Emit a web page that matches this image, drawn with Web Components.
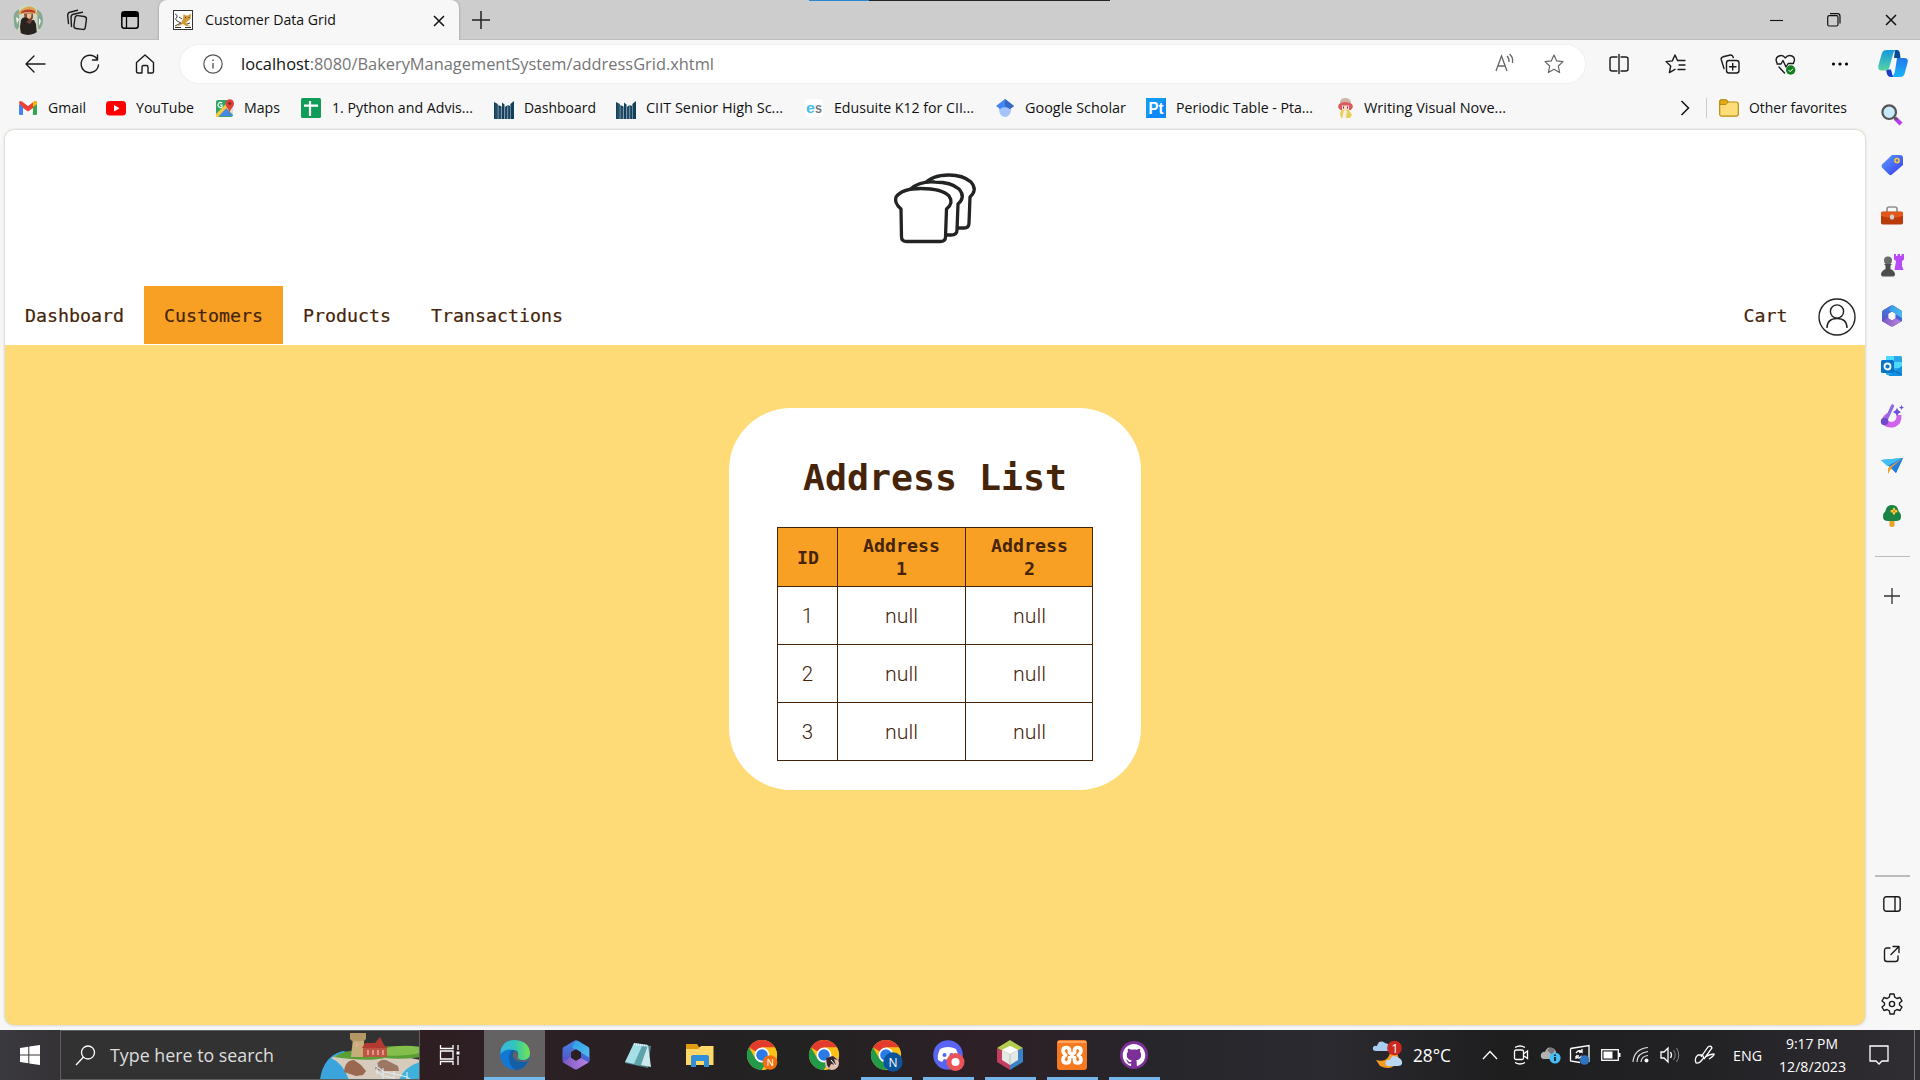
<!DOCTYPE html>
<html lang="en">
<head>
<meta charset="utf-8">
<title>Customer Data Grid</title>
<style>
html,body{margin:0;padding:0;width:1920px;height:1080px;overflow:hidden;background:#f7f7f7}
body{font-family:"Open Sans","Noto Sans",sans-serif;color:#111}
</style>
</head>
<body>
<desktop-screen></desktop-screen>
<script>
const S='fill="none" stroke="#1b1b1b" stroke-width="1.4" stroke-linejoin="round" stroke-linecap="round"';
const W='fill="none" stroke="#fff" stroke-width="1.3"';
const CHROME=`<circle cx="15" cy="15" r="15" fill="#fbc116"/><path d="M15 15L2 7.5A15 15 0 0 1 28 7.5H15Z" fill="#e33b2e"/><path d="M2 7.5A15 15 0 0 0 15 30L21.5 18.7L8.5 18.7Z" fill="#229a4a"/><path d="M28 7.5H15L21.5 18.7L15 30A15 15 0 0 0 28 7.5" fill="#fbc116"/><circle cx="15" cy="15" r="7.4" fill="#fff"/><circle cx="15" cy="15" r="5.8" fill="#2a7be8"/>`;
const M365=`<defs><clipPath id="hx"><path clip-rule="evenodd" d="M9.500 .800Q11 0 12.500 .800L20 5.200Q21 6 21 7.300V14.700Q21 16 20 16.700L12.500 21.200Q11 22 9.500 21.200L2 16.700Q1 16 1 14.700V7.300Q1 6 2 5.200ZM11 6.600L7.300 8.800V13.200L11 15.400L14.700 13.200V8.800Z"/></clipPath><linearGradient id="m1" x2="0" y2="1"><stop stop-color="#3b86e0"/><stop offset="1" stop-color="#5a4fc8"/></linearGradient><linearGradient id="m2" x2="1" y2="1"><stop stop-color="#2f9ce6"/><stop offset="1" stop-color="#56c4f2"/></linearGradient><linearGradient id="m3" x2="1"><stop stop-color="#7a58c0"/><stop offset="1" stop-color="#bd84e2"/></linearGradient></defs><g clip-path="url(#hx)"><rect width="22" height="22" fill="#7a5cc6"/><path d="M11 0L1 6V17L7.300 13V9L14.200 5V0Z" fill="url(#m1)"/><path d="M11 0H22V16L14.200 11.500V9L8 5.500Z" fill="url(#m2)"/><path d="M21 16L11 22L1 16.500L7.300 12.500L11 14.800L14.200 13V11Z" fill="url(#m3)"/><path d="M14.200 9L21 13V17L14.200 13Z" fill="#4764d6"/></g>`;
const CIIT=`<path d="M0 3L3.800 5V20H0ZM4.300 6L7.500 7.500V20H4.300ZM8 3.500L10.500 5.500V20H8ZM11 8L13 6.500V20H11ZM13.400 6L16 7V20H13.400ZM16.400 5L20 2V20H16.400Z" fill="#123f5b"/><path d="M2 5V20M6 9V20M12 9V20M14.700 8V20" stroke="#47708a" stroke-width=".6"/>`;
const ICONS={
avatar:[30,30,`<clipPath id="c"><circle cx="15" cy="15" r="15"/></clipPath><g clip-path="url(#c)"><rect width="30" height="30" fill="#cfd8c4"/><path d="M0 8L6 4V22L2 28ZM24 4L30 9V24L25 24Z" fill="#86a893"/><path d="M3 12l3 2-2 5zM26 13l2 3-2 5z" fill="#f5f4e8"/><path d="M6 7Q11 1 18 1.500Q24 3 23 7L27 10Q15 6 5 10Z" fill="#dba552"/><path d="M8.500 6.500Q14 3 22 6L22 8Q14 6 8 8.500Z" fill="#bd3b2e"/><path d="M11 8.500H20L20 13L18 16H12Z" fill="#8f4a33"/><path d="M14 9H18.500L18 12.500L16 14L14 12.500Z" fill="#e9bd98"/><path d="M8 15Q10 11 14 13L17 15L21 15L23 19L24 30H8L7 22Z" fill="#28231f"/><path d="M17 14L20 15L17 19L13 17Z" fill="#6b4733"/></g>`],
stack:[22,22,`<g ${S}><rect x="8.500" y="7" width="11.500" height="13" rx="2.500" transform="rotate(8 14 13)"/><path d="M5.500 17.500L5 8.500Q5 6 7.500 5.200L16.500 3.200"/><path d="M2.500 14.500L1.700 6.500Q1.500 4 4 3.200L11.500 1.300"/></g>`],
tabact:[18,18,`<rect x=".8" y=".8" width="16.400" height="16.400" rx="2.500" fill="none" stroke="#000" stroke-width="1.500"/><path d="M1 1H17V6H1Z"/><path d="M5.500 5V17" stroke="#000" stroke-width="1.300"/>`],
tomcat:[20,20,`<rect x=".5" y=".5" width="19" height="19" fill="#fff" stroke="#333"/><path d="M3 17L8 13L10 9L10.500 4L13 5.500H15L18 3.500L17.500 9L13 12.500L15 15L18 16.500L13 16L10 14Z" fill="#d19b34"/><path d="M2 4Q5 5 4 7Q1 9 4 11L8 13L2 16M9 9L6 7M14 14L17 13" fill="none" stroke="#444"/><path d="M12 7.500H13M15.500 7.500H16.500M2 17.500H8M12 17.500H18" stroke="#333"/>`],
x:[12,12,`<path d="M1 1L11 11M11 1L1 11" stroke="#111" stroke-width="1.500"/>`],
plus:[18,18,`<path d="M0 9H18M9 0V18" stroke="#222" stroke-width="1.500"/>`],
min:[14,14,`<path d="M0 7.500H13" stroke="#111" stroke-width="1.100"/>`],
rest:[14,14,`<g fill="none" stroke="#111" stroke-width="1.200"><rect x=".7" y="2.700" width="10.300" height="10.300" rx="1.500"/><path d="M3 .7H10.500Q13 .7 13 3.200V10.500"/></g>`],
back:[20,18,`<path d="M9 1L1 9L9 17M1 9H20" ${S}/>`],
reload:[20,20,`<path d="M18.500 11A8.700 8.700 0 1 1 16.800 4.700M17.500 1V6H12.500" ${S}/>`],
home:[20,20,`<path d="M1.500 8.500L10 1L18.500 8.500V17.500Q18.500 19 17 19H13V13Q13 11.500 11.500 11.500H8.500Q7 11.500 7 13V19H3Q1.500 19 1.500 17.500Z" ${S}/>`],
info:[20,20,`<circle cx="10" cy="10" r="9.200" fill="none" stroke="#555" stroke-width="1.200"/><path d="M10 9V14.500M10 5.500V7" stroke="#555" stroke-width="1.400"/>`],
read:[20,20,`<path d="M1 18L6.500 3L12 18M3 13H10M12 3Q14.500 5.500 14 9M14.500 1Q18.500 4.500 17.500 10" fill="none" stroke="#666" stroke-width="1.300"/>`],
star:[20,20,`<path d="M10 1L12.700 6.900L19 7.600L14.300 12L15.600 18.600L10 15.300L4.400 18.600L5.700 12L1 7.600L7.300 6.900Z" fill="none" stroke="#666" stroke-width="1.200" stroke-linejoin="round"/>`],
split:[20,20,`<path d="M8 3H3.200Q1 3 1 5V15Q1 17 3.200 17H8M12 3H16.800Q19 3 19 5V15Q19 17 16.800 17H12M10 .5V19.500" ${S}/>`],
favs:[21,20,`<path d="M12.500 6.500L10 1L7.300 6.900L1 7.600L5.700 12L4.400 18.600L10 15.300M12.500 6.500H20M14 11H20M13 15.500H20" ${S}/>`],
coll:[20,20,`<g ${S}><rect x="6.500" y="6.500" width="12.500" height="12.500" rx="2.500"/><path d="M12.700 9.500V16M9.500 12.700H16M4 14.500L1.200 5.500Q.8 3.500 3 2.800L10.500 1Q12.500.7 13.300 3.500"/></g>`],
heart:[21,21,`<path d="M2 9Q-.5 4 4 2Q8 .5 10.200 4Q13 .5 17 2Q21 4 18.500 9M2 10H6L8 6.500L11 13L13.200 9.500H18.500M4 13L9.500 19" ${S}/><circle cx="15.700" cy="16" r="4.700" fill="#12801f"/><path d="M13.500 16L15.200 17.700L18 14.700" fill="none" stroke="#fff"/>`],
dots:[18,6,`<circle cx="2.500" cy="3" r="1.600"/><circle cx="9" cy="3" r="1.600"/><circle cx="15.500" cy="3" r="1.600"/>`],
copilot:[30,28,`<defs><linearGradient id="a" x2="0" y2="1"><stop stop-color="#1597df"/><stop offset="1" stop-color="#55d4a0"/></linearGradient><linearGradient id="b" x2="0" y2="1"><stop stop-color="#2377e8"/><stop offset="1" stop-color="#14b6fa"/></linearGradient></defs><path d="M19 8H26Q31 8 29.500 13L26.500 24Q25.500 27 22 27H13Q16 26 17 21Z" fill="url(#b)"/><path d="M8 19.500H13L15 27H13Q10 27 9 24Z" fill="#173ecb"/><path d="M17 0H19Q21.500 0 22 4L22.500 8H16Z" fill="#064b8f"/><path d="M4 3Q5 0 9 0H18Q15.500 1 14.500 6L11.500 17Q10.500 20.500 7 20.500H4Q-1 20.500 .5 15Z" fill="url(#a)"/>`],
gmail:[18,14,`<path d="M0 2V13H4V6L9 10L14 6V13H18V2" fill="#fff"/><path d="M0 3V13Q0 14 1 14H4V4Z" fill="#4285f4"/><path d="M14 4V14H17Q18 14 18 13V3Z" fill="#34a853"/><path d="M0 2Q0-1 3 .5L9 5L15 .5Q18-1 18 2L14 7L9 10.500L4 7Z" fill="#ea4335"/><path d="M14 1.500L16 0Q18 0 18 3L14 6Z" fill="#fbbc04"/>`],
yt:[20,15,`<rect width="20" height="14.500" rx="3.500" fill="#f00"/><path d="M8 4V10.500L13.500 7.200Z" fill="#fff"/>`],
maps:[18,18,`<rect y="1" width="17" height="17" rx="2" fill="#31a567"/><path d="M1 17L9 9L17 17Z" fill="#4687e8"/><path d="M0 15L12 3L14 5L2 18H0Z" fill="#f8cd3b"/><path d="M10 9L17 16V6Z" fill="#ddd"/><path d="M13.500 14C13 10 9.500 8 9.500 4.500A4.200 4.200 0 0 1 18 4.500C18 8 14 10 13.500 14" fill="#df4237"/><circle cx="13.700" cy="4.500" r="1.500" fill="#842c22"/><path d="M6 4A2.500 2.500 0 1 0 6 8V6H4" fill="none" stroke="#fff" stroke-width="1.100"/>`],
sheets:[20,20,`<rect width="20" height="20" rx="1.500" fill="#109d58"/><path d="M3 7.700H17M9 3V18" stroke="#fff" stroke-width="2.200"/>`],
ciit:[20,20,CIIT],
es:[18,18,`<rect width="18" height="18" rx="3" fill="#fff"/><text x="1" y="13.500" font-family="Liberation Sans" font-size="14" font-weight="bold" textLength="9" lengthAdjust="spacingAndGlyphs" fill="#46bfe5">e</text><text x="10" y="13.500" font-family="Liberation Sans" font-size="14" font-weight="bold" textLength="7" lengthAdjust="spacingAndGlyphs" fill="#777">s</text>`],
scholar:[18,18,`<path d="M3 8H15V11Q14 18 9 18Q4 18 3 11Z" fill="#a3c3fb"/><path d="M9 0L18 7L14 10Q9 6 4 10L0 7Z" fill="#4285f4"/><path d="M9 0L18 7L14 10Q12 8 9 8Z" fill="#356ac3"/>`],
pt:[20,20,`<rect width="20" height="20" fill="#129af5"/><path d="M0 20L20 0V20Z" fill="#087ff8" opacity=".6"/><text x="2.500" y="15.500" font-family="Liberation Sans" font-size="16" font-weight="bold" textLength="15" lengthAdjust="spacingAndGlyphs" fill="#fff">Pt</text>`],
girl:[18,20,`<path d="M3 4Q4 0 8 0Q13 0 14 4V7H3Z" fill="#cfb7a8"/><path d="M2 6Q8 2 15 6L16 9L14 12H3L1 9Z" fill="#dc5a60"/><path d="M5 7.500H12V12H5Z" fill="#f9ddc9"/><path d="M4 12H12L15 17L13 20H4L3 16Z" fill="#e9cf55"/><path d="M7 12L10 13L9 20H5Z" fill="#f4efe6"/><path d="M6.500 8.500v2M10.500 8.500v2" stroke="#634"/>`],
chev:[10,16,`<path d="M1.500 1L8.500 8L1.500 15" fill="none" stroke="#111" stroke-width="1.500"/>`],
fold:[20,18,`<path d="M.7 3Q.7.8 3 .8H7L9.500 3H17Q19.300 3 19.300 5V15Q19.300 17.200 17 17.200H3Q.7 17.200 .7 15Z" fill="#fddc7a" stroke="#b98b0b" stroke-width="1.200"/><path d="M1 1H7L9 3L7 5.500H1Z" fill="#e5ad12" stroke="#b98b0b"/>`],
search:[22,22,`<path d="M14 14L20 20" stroke="#b83de8" stroke-width="4"/><path d="M13 13L16 16" stroke="#555" stroke-width="2"/><circle cx="8.200" cy="8.200" r="6.800" fill="#c9e9fc" stroke="#555" stroke-width="2.200"/>`],
tag:[22,22,`<defs><linearGradient id="g" x2="1" y2="1"><stop stop-color="#59a3ff"/><stop offset="1" stop-color="#3835ed"/></linearGradient></defs><path d="M11 1L19 1Q22 1 22 4V11L11 20.500Q9.500 22 8 20.500L1 13.500Q0 12 1 10.500Z" fill="url(#g)"/><circle cx="16" cy="6.500" r="2.100" fill="#5c6be0" stroke="#ffcd32" stroke-width="1.500"/>`],
tool:[24,18,`<path d="M7 6V3Q7 1 9 1H15Q17 1 17 3V6" fill="none" stroke="#929292" stroke-width="1.700"/><rect x="1" y="5.500" width="22" height="13" rx="1.800" fill="#b93a0b"/><path d="M1 6H23V10L14 12H10L1 10Z" fill="#e3581a"/><rect x="10" y="8.500" width="4" height="5" rx="1.500" fill="#d0d0d0"/>`],
chess:[24,25,`<path d="M14 1H16V3H17.500V1H20V3H21.500V1H24V6.500L22 8V13L23.500 17H14.500L16 8L14 6.500Z" fill="#b84bf5"/><circle cx="8" cy="7.500" r="4" fill="#6a6a6a"/><path d="M4 11H12L10.500 12.500V16Q14.500 18 15 21Q15 23.500 13 23.500H3Q1 23.500 1 21Q1.500 18 5.500 16V12.500Z" fill="#4d4d4d"/>`],
m365:[22,22,M365],
outlook:[22,22,`<rect x="5" y="1" width="16" height="19" rx="1.500" fill="#28a8ea"/><path d="M5 1H13V7H5ZM13 7H21V13H13Z" fill="#50d9ff"/><path d="M21 11V20Q21 21 20 21H7Z" fill="#1490df"/><path d="M5 11L21 20" stroke="#0a62b8"/><rect y="5" width="13" height="13" rx="1.500" fill="#0876c8"/><circle cx="6.500" cy="11.500" r="3" fill="none" stroke="#fff" stroke-width="1.800"/>`],
design:[24,24,`<path d="M7 9Q0 14 3 20Q7 25 15 23Q22 20 21.500 11L16.500 11Q17 18 11 18Q6 17 9 11Z" fill="#ce64ec"/><path d="M12.500 2L6.500 15" stroke="#8f6ae0" stroke-width="3.200" stroke-linecap="round"/><ellipse cx="4.500" cy="17.500" rx="3.700" ry="3.700" fill="#7049c8"/><path d="M17 4L18.500 6.500L21 8L18.500 9.500L17 12L15.500 9.500L13 8L15.500 6.500ZM21.500 1L22.300 2.700L24 3.500L22.300 4.300L21.500 6L20.700 4.300L19 3.500L20.700 2.700Z" fill="#6a50dc"/>`],
plane:[22,18,`<path d="M0 3L22 1L15 16L10 11Z" fill="#2088ec"/><path d="M0 3L22 1L6 9Z" fill="#43bdf5"/><path d="M22 1L7 11V17L10 12Z" fill="#f5a020"/><path d="M22 1L10 11L15 16Z" fill="#257cdf"/>`],
tree:[20,25,`<path d="M7.500 14H12.500V22Q10 24 7.500 22Z" fill="#f0a026"/><path d="M10 1Q15.500 1 16.500 7Q19 9 19 13Q19 17 14 17H6Q1 17 1 13Q1 9 3.500 7Q4.500 1 10 1" fill="#198443"/><path d="M12 5V9.500M9.700 7.200H14.300" stroke="#ffc93c" stroke-width="2.400" stroke-linecap="round"/><circle cx="12" cy="7.200" r="1" fill="#d98000"/>`],
splus:[16,16,`<path d="M0 8H16M8 0V16" stroke="#333" stroke-width="1.300"/>`],
panel:[18,16,`<rect x=".8" y=".8" width="16.400" height="14.400" rx="2.500" ${S}/><path d="M12 1V15" ${S}/>`],
share:[18,18,`<path d="M7 3H4Q1.500 3 1.500 5.500V14Q1.500 16.500 4 16.500H12.500Q15 16.500 15 14V11M10 1.500H16V7.500M16 1.500L8 9.500" ${S}/>`],
gear:[22,22,`<path d="M9 1H13L13.700 4.200L16 5.500L19 4.500L21 8L18.500 10V12L21 14L19 17.500L16 16.500L13.700 17.800L13 21H9L8.300 17.800L6 16.500L3 17.500L1 14L3.500 12V10L1 8L3 4.500L6 5.500L8.300 4.200Z" ${S}/><circle cx="11" cy="11" r="2.600" ${S}/>`],
bread:[84,72,`<g fill="#fff" stroke="#222423" stroke-width="3.300" stroke-linejoin="round"><path d="M31 12Q38 2 56 2Q70 2 78 9Q85 17 77 24L76 50Q76 55 71 55H55V22Z"/><path d="M18 16Q26 8 42 9Q58 9 66 16Q73 24 65 31L64 57Q64 62 58 62H45V25Z"/><path d="M8 36Q1 30 3 24Q9 15.500 28 15.500Q49 15.500 56 23Q61 30 53.500 36L52.500 64Q52.500 68.500 47 68.500H14Q8.500 68.500 8.500 64Z"/></g>`],
user:[38,38,`<g fill="none" stroke="#222" stroke-width="1.400"><circle cx="19" cy="19" r="18"/><circle cx="19" cy="13.500" r="6.600"/><path d="M9 30Q9 20.500 19 20.500Q29 20.500 29 30"/></g>`],
win:[20,20,`<path d="M0 3L8.300 1.700V9.500H0ZM9.300 1.500L20 0V9.500H9.300ZM0 10.500H8.300V18.300L0 17ZM9.300 10.500H20V20L9.300 18.500Z" fill="#fff"/>`],
mag:[21,21,`<g ${W}><circle cx="13" cy="7.500" r="6.500"/><path d="M8.500 12L1 20"/></g>`],
castle:[100,47,`<path d="M0 47Q3 23 23 18L44 23L35 31L54 47Z" fill="#39a5dc"/><path d="M11 25Q30 14 66 20L100 27V47H29Q23 30 11 25" fill="#d7cbbd"/><path d="M79 47Q84 34 100 29V47Z" fill="#3eb1dc"/><path d="M14 24Q27 15 48 18Q72 9 100 16V24Q80 27 65 25Q48 29 14 24" fill="#5a9e36"/><path d="M57 18Q79 10 100 14V20Q84 24 57 22Z" fill="#84bf4c"/><path d="M33 5H44V24H31Z" fill="#c6ad79"/><path d="M30 0H46V6L44 8H32L30 6Z" fill="#b59665"/><path d="M43 14H67V24H43Z" fill="#bd5540"/><path d="M42 15L45 10H55L60 4L64 12L67 15Z" fill="#b23a30"/><path d="M48 17v5M53 17v5M58 17v5M63 17v5M37 10v4" stroke="#eaa" stroke-width="1.500"/><path d="M24 39Q25 27 34 27L41 32L46 38L43 42L36 43Z" fill="#9a6850"/><path d="M55 36Q58 25 66 27L78 33L79 38L61 38Z" fill="#9b7764"/><path d="M57 31V41M63 35V46M74 38V47M87 39V47M56 33L64 39L75 41L87 44L91 47M56 38L64 43L74 45" fill="none" stroke="#dcebf2" stroke-width="1.100"/>`],
taskview:[22,22,`<g fill="none" stroke="#fff" stroke-width="1.300"><path d="M1.500 1V4.500H14V1M1.500 21V17.500H14V21M1.500 7H14V15H1.500ZM19 1V6M19 12V21"/></g><path d="M17.500 7.500H20.500V10.500H17.500Z" fill="#fff"/>`],
edge:[30,30,`<defs><linearGradient id="e"><stop stop-color="#35b8e9"/><stop offset=".5" stop-color="#32c5b5"/><stop offset="1" stop-color="#72e64e"/></linearGradient></defs><circle cx="15" cy="15" r="14.800" fill="#1378d4"/><path d="M.5 12Q2 0 15 0Q29 1 30 13Q30 20 23 20Q17 20 18 17Q19 11 13 10Q6 8 .5 14Z" fill="url(#e)"/><path d="M12 10Q19 9 18 16Q16 20 24 20.500Q28 20 29 18Q26 30 15 30Q8 24 9 17Q10 11 12 10" fill="#135fa8"/><path d="M14 11Q19 12 18 16.500Q17 20 23 20.500L30 19L29 21Q24 23 18 21Q12 19 13 14Z" fill="#656264"/>`],
m365b:[30,30,`<g transform="scale(1.36)">${M365}</g>`],
note:[29,28,`<path d="M11 3L27 5L24 27L1 22Z" fill="#4c7f87"/><path d="M10 2L24 4L15 24L1 21Z" fill="#a5dfe8"/><path d="M18 5L25 5L18 25L10 23Z" fill="#5ea2ab"/><path d="M24 4L27 26L17 24Z" fill="#cce9ed"/><path d="M10 3L24 5" stroke="#eee" stroke-width="2" stroke-dasharray="1 1"/>`],
files:[28,24,`<path d="M0 1H11L13 4H27V7H0Z" fill="#e09b13"/><path d="M0 6H12L15 3H27.500V22H0Z" fill="#ffd867"/><path d="M5 24V14Q5 12 7 12H21Q23 12 23 14V24H18V18H10V24Z" fill="#3290db"/>`],
chr1:[30,30,CHROME+`<circle cx="23" cy="22.500" r="7.300" fill="#ee7011"/><text x="19.800" y="26" font-family="Open Sans" font-size="9.500" fill="#fff">N</text>`],
chr2:[30,30,CHROME+`<circle cx="23" cy="23" r="7" fill="#e4bcae"/><path d="M17 18L24 16L29 20L25 19L27 25L22 24L20 28L18 25Z" fill="#36272a"/><path d="M22 20l5 6" stroke="#fff"/>`],
chr3:[30,30,CHROME+`<circle cx="22" cy="22" r="9.700" fill="#0c559d"/><text x="17.500" y="26.500" font-family="Open Sans" font-size="12" fill="#fff">N</text>`],
discord:[30,30,`<circle cx="15" cy="15" r="14.800" fill="#5865f2"/><path d="M7 9Q15 5 23 9Q26 15 25 20L21 22L19 19Q15 20 11 19L9 22L5 20Q4 15 7 9" fill="#fff"/><circle cx="11.500" cy="15" r="2" fill="#5865f2"/><circle cx="18.500" cy="15" r="2" fill="#5865f2"/><circle cx="22.500" cy="22" r="9" fill="#ec5357"/><circle cx="22.500" cy="22" r="4" fill="#fff"/>`],
netb:[28,30,`<path d="M14 0L27 8L14 15L1 8Z" fill="#b4cd4e"/><path d="M1 8L14 15V30L1 22Z" fill="#c43e60"/><path d="M27 8L14 15V30L27 22Z" fill="#3b83c6"/><path d="M14 6L22 10V20L14 25L6 20V10Z" fill="#e5e9e5"/><path d="M6 10L14 14L22 10M14 14V25" fill="none" stroke="#b8c3bc"/><path d="M14 6L22 10L14 14L6 10Z" fill="#fff"/>`],
xampp:[30,30,`<rect width="30" height="30" rx="3" fill="#f47920"/><path d="M1 2H29" stroke="#ffb77d" stroke-width="1.500"/><path d="M12.500 10Q12 7.500 9.500 7.500Q6 7.500 6 11Q6 13 8.500 15Q6 17 6 19.500Q6 23 9.500 23Q12.500 23 12.500 20V17.500L15 15L12.500 12.500ZM17.500 10Q18 7.500 20.500 7.500Q24 7.500 24 11Q24 13 21.500 15Q24 17 24 19.500Q24 23 20.500 23Q17.500 23 17.500 20V17.500L15 15L17.500 12.500Z" fill="none" stroke="#fff" stroke-width="3.700" stroke-linejoin="round"/>`],
github:[28,28,`<circle cx="14" cy="14" r="14" fill="#7d3098"/><path transform="translate(2.700 2.700) scale(.94)" fill="#fff" d="M12 .297c-6.630 0-12 5.373-12 12 0 5.303 3.438 9.800 8.205 11.385.6.113.82-.258.82-.577 0-.285-.01-1.040-.015-2.040-3.338.724-4.042-1.610-4.042-1.610C4.422 18.070 3.633 17.700 3.633 17.700c-1.087-.744.084-.729.084-.729 1.205.084 1.838 1.236 1.838 1.236 1.070 1.835 2.809 1.305 3.495.998.108-.776.417-1.305.76-1.605-2.665-.3-5.466-1.332-5.466-5.930 0-1.310.465-2.380 1.235-3.220-.135-.303-.54-1.523.105-3.176 0 0 1.005-.322 3.300 1.230.96-.267 1.980-.399 3-.405 1.020.006 2.040.138 3 .405 2.280-1.552 3.285-1.230 3.285-1.230.645 1.653.24 2.873.12 3.176.765.840 1.230 1.910 1.230 3.220 0 4.610-2.805 5.625-5.475 5.920.42.360.81 1.096.81 2.220 0 1.606-.015 2.896-.015 3.286 0 .315.21.690.825.570C20.565 22.092 24 17.592 24 12.297c0-6.627-5.373-12-12-12"/>`],
weather:[32,30,`<path d="M4 20Q18 24 19 7Q28 12 26 21Q20 32 8 26Z" fill="#f59a22"/><path d="M4 11Q0 11 1 7Q3 5 5 6Q7-1 13 3Q20 4 18 11Z" fill="#a9ccf1"/><path d="M16 26Q12 25 14 21Q16 19 18 20Q20 14 25 17Q31 19 30 24Q29 26 26 26Z" fill="#b9d8f6"/><circle cx="22.500" cy="8" r="7.300" fill="#ca2921"/><text x="19.500" y="12.500" font-family="Open Sans" font-size="12" fill="#fff">1</text>`],
up:[16,10,`<path d="M1 9L8 1.500L15 9" ${W}/>`],
cam:[16,20,`<g ${W}><rect x="1.500" y="5" width="9" height="9.500" rx="1.500"/><path d="M11 8.500L14.500 6V13.500L11 11M2 2.500Q7-.5 12 2.500M2 17.500Q7 20.500 12 17.500"/></g>`],
cloud:[22,20,`<path d="M3 14Q0 13 1 9Q3 6 5 7Q7 1 12 3Q16 4 16 8L20 11Q20 14 17 14Z" fill="#b2b2b2"/><path d="M7 5Q12 0 15 5L12 10Z" fill="#777"/><circle cx="15" cy="13" r="5.600" fill="#46bdf5"/><path d="M15 12V16M15 9.500V11" stroke="#111" stroke-width="1.600"/>`],
sync:[22,22,`<path d="M1.500 4.500L20 1.500V18M1.500 4.500V17L11 18.500" ${W}/><path d="M7 9Q10 5 13 8V5M13 8H10M13 12Q9 16 7 12V15M7 12H10" ${W}/><circle cx="15.500" cy="16" r="4.800" fill="#2f73c1"/>`],
bat:[20,12,`<rect x=".7" y=".7" width="16.600" height="10.600" ${W}/><path d="M2.500 2.500H11.500V9.500H2.500Z" fill="#fff"/><path d="M18.500 4V8" stroke="#fff" stroke-width="2"/>`],
wifi:[18,18,`<path d="M1 16Q2 3 16 1.500M5 16Q5 7 16 5.500M9 16Q9.500 10 16 9.500" fill="none" stroke="#ddd" stroke-width="1.200"/><circle cx="14.500" cy="14.500" r="2" fill="#fff"/>`],
vol:[20,18,`<path d="M1 6H4L8 2V16L4 12H1ZM10.500 6Q12.500 9 10.500 12" ${W}/><path d="M13.500 4Q17 9 13.500 14M16.500 2Q21 9 16.500 16" fill="none" stroke="#888"/>`],
pen:[22,20,`<path d="M2 18Q0 13 4 10H8Q11 12 8 15Q5 19 2 18M7 12L14 2Q17 0 18 3L10 14M11 12Q16 9 20 9Q21 10 15 14" ${W}/>`],
notif:[20,20,`<path d="M1 1H19V16H13L10 19L7 16H1Z" ${W}/>`]
};

class PxIcon extends HTMLElement{
  constructor(){super();this.attachShadow({mode:'open'})}
  connectedCallback(){const [w,h,b]=ICONS[this.getAttribute('name')];
    this.shadowRoot.innerHTML=`<style>:host{display:flex;flex:none}svg{display:block;overflow:visible}</style><svg width="${w}" height="${h}" viewBox="0 0 ${w} ${h}">${b}</svg>`}
}
/* One line of text, condensed or widened to the width given in "w". */
class FitText extends HTMLElement{
  constructor(){super();this.attachShadow({mode:'open'}).innerHTML=`<style>:host{display:block;flex:none;white-space:pre;line-height:1.35}span{display:inline-block;transform-origin:0 50%}</style><span><slot></slot></span>`}
  connectedCallback(){const w=+this.getAttribute('w'),s=this.shadowRoot.querySelector('span');
    this.style.width=w+'px';
    const fit=()=>{s.style.transform='';const n=s.getBoundingClientRect().width;if(n)s.style.transform=`scaleX(${w/n})`};
    fit();requestAnimationFrame(fit);document.fonts.ready.then(fit)}
}
/* Horizontal strip with vertically centred children. */
class BarRow extends HTMLElement{
  constructor(){super();this.attachShadow({mode:'open'}).innerHTML=`<style>:host{display:flex;align-items:center;box-sizing:border-box}::slotted(*){flex:none}</style><slot></slot>`}
}
/* Lays out [x, width, markup] entries in order as gaps and boxes. */
const seq=(start,items)=>{let p=start;return items.map(([x,w,m,dy=0])=>{const o=`<div style="display:flex;flex:none;justify-content:center;margin-left:${x-p}px;width:${w}px;margin-top:${dy}px">${m}</div>`;p=x+w;return o}).join('')};
const ic=n=>`<px-icon name="${n}"></px-icon>`;
const tx=(w,t)=>`<fit-text w="${w}">${t}</fit-text>`;

class TabStrip extends HTMLElement{
  constructor(){super();this.attachShadow({mode:'open'}).innerHTML=`<style>
  :host{display:block;height:40px;background:#cdcdcd;font-size:14.500px}
  bar-row{height:40px;box-shadow:inset 0 -1px #bebebe}
  .tab{width:300px;height:40px;display:flex;align-items:center;background:#f7f7f7;border-radius:8px 8px 0 0;box-shadow:0 0 3px #0004;clip-path:inset(0 -3px 0 -3px);margin-left:20px}
  .edge{align-self:flex-start;width:301px;height:1px;background:linear-gradient(90deg,#2b88d0 60px,#242424 60px)}
  </style><bar-row>${seq(0,[[13,30,ic('avatar')],[66,22,ic('stack')],[121,18,ic('tabact')]])}
  <div class="tab">${seq(0,[[14,20,ic('tomcat')],[46,131,tx(131,'Customer Data Grid'),-1],[274,12,ic('x'),1]])}</div>
  ${seq(459,[[471.5,18,ic('plus'),-1]])}<div class="edge" style="margin-left:319.500px"></div>
  ${seq(1110,[[1770,14,ic('min')],[1827,14,ic('rest')],[1885,12,ic('x')]])}</bar-row>`}
}
class AddressBar extends HTMLElement{
  constructor(){super();this.attachShadow({mode:'open'}).innerHTML=`<style>
  :host{display:block;height:48px;font-size:17px}bar-row{height:48px}
  .pill{width:1405px;height:38px;border-radius:19px;background:#fff;display:flex;align-items:center;margin-left:25px;box-shadow:0 0 3px #0001}
  span{color:#757575}
  </style><bar-row>${seq(0,[[24.5,20,ic('back'),-1],[80,20,ic('reload')],[135,20,ic('home')]])}
  <div class="pill">${seq(0,[[22.5,20,ic('info')],[61,473,tx(473,'localhost<span>:8080/BakeryManagementSystem/addressGrid.xhtml</span>')],[1315,20,ic('read'),-2],[1364,20,ic('star')]])}</div>
  ${seq(1585,[[1609,20,ic('split')],[1664.5,21,ic('favs')],[1720,20,ic('coll')],[1775,21,ic('heart'),1],[1831,18,ic('dots')],[1878,30,ic('copilot')]])}</bar-row>`}
}
class BookmarkBar extends HTMLElement{
  constructor(){super();this.attachShadow({mode:'open'}).innerHTML=`<style>
  :host{display:block;height:42px;font-size:14.500px}bar-row{height:40px}.sep{width:1px;height:20px;background:#ccc}
  </style><bar-row>${seq(0,[[19,18,ic('gmail')],[47.5,38,tx(38,'Gmail')],[106,20,ic('yt')],[136,58,tx(58,'YouTube')],[215.5,18,ic('maps')],[244,36,tx(36,'Maps')],[301,20,ic('sheets')],[331.5,141,tx(141,'1. Python and Advis...')],[494,20,ic('ciit'),2],[523.5,72,tx(72,'Dashboard')],[616,20,ic('ciit'),2],[646,137,tx(137,'CIIT Senior High Sc...')],[805,18,ic('es')],[834,140,tx(140,'Edusuite K12 for CII...')],[996,18,ic('scholar')],[1025,101,tx(101,'Google Scholar')],[1146,20,ic('pt')],[1176,137,tx(137,'Periodic Table - Pta...')],[1336.5,18,ic('girl')],[1364,142,tx(142,'Writing Visual Nove...')],[1679.5,10,ic('chev')],[1706,1,'<i class="sep"></i>'],[1719,20,ic('fold')],[1749,98,tx(98,'Other favorites')]])}</bar-row>`}
}
class SiteNav extends HTMLElement{
  constructor(){super();this.attachShadow({mode:'open'}).innerHTML=`<style>
  :host{display:block;background:#fff;height:215px;font:18.270px "DejaVu Sans Mono","Liberation Mono",monospace;color:#452409}
  .logo{height:156px;display:flex;justify-content:center;align-items:flex-start;padding:43px 0 0 0;box-sizing:border-box}
  nav{height:58px;display:flex;align-items:stretch}
  a{display:flex;align-items:center;padding:2px 20px 0;box-sizing:border-box;-webkit-text-stroke:.2px #452409}a.on{background:#f8a024}
  .gap{flex:1}nav px-icon{align-self:center;margin:3px 9.500px 0 10px}
  </style><div class="logo">${ic('bread')}</div>
  <nav>${[['Dashboard',99],['Customers',99],['Products',88],['Transactions',132]].map(([t,w],i)=>`<a class="${i==1?'on':''}">${tx(w,t)}</a>`).join('')}<div class="gap"></div><a>${tx(44,'Cart')}</a>${ic('user')}</nav>`}
}
class AddressCard extends HTMLElement{
  constructor(){super();this.attachShadow({mode:'open'}).innerHTML=`<style>
  :host{display:flex;flex-direction:column;align-items:center;width:412px;height:382px;border-radius:62px;background:#fff;color:#452409;font-family:"DejaVu Sans Mono",monospace}
  h1{margin:45px 0 27px;height:47px;line-height:50px;font-size:36px;font-weight:700}h1 fit-text{line-height:50px}
  .grid{display:grid;grid-template-columns:59px 127px 126px;grid-template-rows:58px 57px 57px 57px;gap:1px;padding:1px;background:#452409}
  .grid div{box-sizing:border-box;background:#fff;display:flex;flex-direction:column;align-items:center;justify-content:center;font:300 20.500px/27px Roboto,sans-serif;padding-top:1px}
  .grid fit-text{line-height:27px}
  .grid .h{background:#f8a024;padding:0;font:700 18px/23px "DejaVu Sans Mono",monospace}.grid .h fit-text{line-height:23px}
  </style><h1>${tx(264,'Address List')}</h1><div class="grid">
  <div class="h">${tx(22,'ID')}</div><div class="h">${tx(77,'Address')}${tx(11,'1')}</div><div class="h">${tx(77,'Address')}${tx(11,'2')}</div>
  ${[1,2,3].map(n=>`<div>${n}</div><div>${tx(33,'null')}</div><div>${tx(33,'null')}</div>`).join('')}</div>`}
}
class WebPage extends HTMLElement{
  constructor(){super();this.attachShadow({mode:'open'}).innerHTML=`<style>
  :host{display:flex;flex-direction:column;width:1860px;height:895px;margin-left:5px;border-radius:9px;overflow:hidden;background:#fedb76;box-shadow:0 0 3px #0004;flex:none}
  main{flex:1;display:flex;justify-content:center;align-items:flex-start;padding-top:63px}
  </style><site-nav></site-nav><main><address-card></address-card></main>`}
}
class SideBar extends HTMLElement{
  constructor(){super();this.attachShadow({mode:'open'}).innerHTML=`<style>
  :host{display:flex;flex-direction:column;align-items:center;width:54px;height:941px;flex:none}
  .b{height:50px;display:flex;align-items:center;flex:none;margin-bottom:.2px}
  hr{width:35px;height:1px;border:0;background:#bbb;margin:14px 0 14px;flex:none}
  .low{margin-top:auto;display:flex;flex-direction:column;align-items:center;padding-bottom:2.400px}.low .b{margin:0}.low hr{height:2px;margin:0 0 2px}
  </style>${['search','tag','tool','chess','m365','outlook','design','plane','tree'].map(n=>`<div class="b">${ic(n)}</div>`).join('')}<hr><div class="b">${ic('splus')}</div>
  <div class="low"><hr>${['panel','share','gear'].map(n=>`<div class="b">${ic(n)}</div>`).join('')}</div>`}
}
class TaskBar extends HTMLElement{
  constructor(){super();const apps=['edge','m365b','note','files','chr1','chr2','chr3','discord','netb','xampp','github'];
  this.attachShadow({mode:'open'}).innerHTML=`<style>
  :host{display:block;height:50px;color:#fff;background:linear-gradient(90deg,#3b3a3e 0,#353236 60px,#2e1e22 420px,#2b2024 560px,#222 800px,#2e2027 990px,#26262b 1160px,#2b2a30 1330px,#1e1e1f 1500px,#222124 1700px,#302e33)}
  bar-row{height:50px}.find{box-sizing:border-box;width:360px;height:50px;margin-left:20px;background:#323232;border:1px solid #5e5e5e;display:flex;align-items:center;font-size:18px;color:#ddd;overflow:hidden}
  .app{width:62px;height:50px;box-sizing:border-box;display:flex;align-items:center;justify-content:center}
  .app.on{background:linear-gradient(#76b5ea,#76b5ea) 50% 100%/51px 3px no-repeat}
  .app.act{background:linear-gradient(#76b9ed,#76b9ed) 0 100%/61px 3px no-repeat,#656264;width:61px}
  .clock{font-size:14.500px;line-height:23px;width:68px;display:flex;flex-direction:column;align-items:center}.clock fit-text{line-height:23px}
  .t{font-size:18px}.e{font-size:15px}.end{width:1px;height:50px;background:#777}
  </style><bar-row>${seq(0,[[20,20,ic('win')]])}<div class="find">${seq(0,[[14,21,ic('mag')],[49,164,tx(164,'Type here to search')],[259,100,ic('castle'),3]])}</div>
  ${seq(420,[[439,22,ic('taskview')]])}<div style="width:23px"></div>${apps.map((n,i)=>`<div class="app ${i==0?'act':i>5?'on':''}">${ic(n)}</div>`).join('')}
  ${seq(1165,[[1372,32,ic('weather')],[1413,38,`<div class="t">${tx(38,'28°C')}</div>`],[1482,16,ic('up')],[1513,16,ic('cam')],[1540,22,ic('cloud')],[1569,22,ic('sync')],[1601,20,ic('bat')],[1632,18,ic('wifi')],[1660,20,ic('vol')],[1694,22,ic('pen')],[1733,29,`<div class="e">${tx(29,'ENG')}</div>`],[1778,68,`<div class="clock">${tx(52,'9:17 PM')}${tx(67,'12/8/2023')}</div>`],[1869,20,ic('notif')],[1914,1,'<i class="end"></i>']])}</bar-row>`}
}
class DesktopScreen extends HTMLElement{
  constructor(){super();this.attachShadow({mode:'open'}).innerHTML=`<style>
  :host{display:flex;flex-direction:column;width:1920px;height:1080px;background:#f7f7f7;overflow:hidden}
  .mid{display:flex;height:900px}.mid side-bar{margin-top:-40px}
  tab-strip,address-bar,bookmark-bar,task-bar{flex:none}
  </style><tab-strip></tab-strip><address-bar></address-bar><bookmark-bar></bookmark-bar><div class="mid"><web-page></web-page><side-bar></side-bar></div><task-bar></task-bar>`}
}
const defs={'px-icon':PxIcon,'fit-text':FitText,'bar-row':BarRow,'tab-strip':TabStrip,'address-bar':AddressBar,'bookmark-bar':BookmarkBar,'site-nav':SiteNav,'address-card':AddressCard,'web-page':WebPage,'side-bar':SideBar,'task-bar':TaskBar,'desktop-screen':DesktopScreen};
for(const n in defs)customElements.define(n,defs[n]);
</script>
</body>
</html>
